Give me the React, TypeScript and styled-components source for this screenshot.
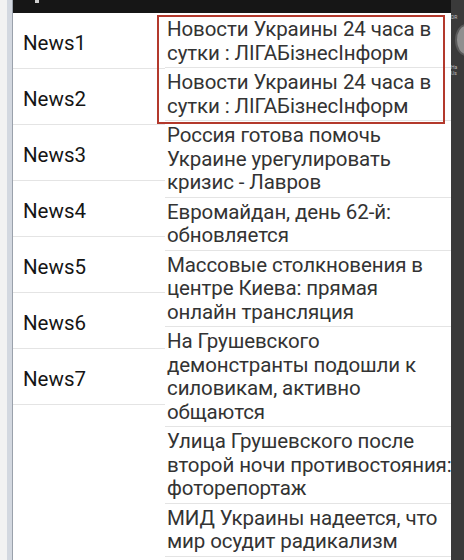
import React from "react";
import styled, { createGlobalStyle } from "styled-components";

const GlobalStyle = createGlobalStyle`
  html, body {
    margin: 0;
    padding: 0;
    background: #ffffff;
  }
  body {
    font-family: Roboto, "Noto Sans", "DejaVu Sans", sans-serif;
  }
`;

const Frame = styled.div`
  display: flex;
  width: 464px;
  height: 560px;
  overflow: hidden;
`;

const HostStrip = styled.div`
  width: 13px;
  flex-shrink: 0;
  display: flex;
  background: #eef0f3;
`;

const HostEdge = styled.div`
  width: 7px;
  background: #f2f2f2;
`;

const HostBorder = styled.div`
  width: 5px;
  background: #d3d8e0;
  border-right: 1px solid #9aa1ab;
`;

const Screen = styled.div`
  flex: 1;
  display: flex;
  flex-direction: column;
  min-width: 0;
`;

const ActionBar = styled.div`
  height: 13px;
  flex-shrink: 0;
  background: #161616;
  display: flex;
  align-items: flex-start;
  padding-left: 22px;
`;

const ActionBit = styled.div`
  width: 4px;
  height: 3px;
  background: #cfcfcf;
`;

const Content = styled.div`
  position: relative;
  flex: 1;
  display: flex;
  background: #ffffff;
  overflow: hidden;
`;

const TitleList = styled.div`
  width: 152px;
  flex-shrink: 0;
  display: flex;
  flex-direction: column;
`;

const TitleRow = styled.div`
  height: 56px;
  box-sizing: border-box;
  display: flex;
  align-items: center;
  padding: 4px 0 0 10px;
  border-bottom: 1px solid #e4e4e4;
  font-size: 20.5px;
  color: #151515;
`;

const HeadlineList = styled.div`
  flex: 1;
  min-width: 0;
  display: flex;
  flex-direction: column;
  padding-top: 2px;
`;

const Headline = styled.div`
  padding: 3px 0 2px 2px;
  border-bottom: 1px solid #e4e4e4;
  font-size: 20.5px;
  line-height: 23.5px;
  letter-spacing: -0.1px;
  color: #333333;
  white-space: pre;
`;

const Highlight = styled.div`
  position: absolute;
  left: 144px;
  top: 2px;
  width: 284px;
  height: 105px;
  border: 2px solid #b3392c;
  pointer-events: none;
`;

const SidePanel = styled.div`
  width: 13px;
  flex-shrink: 0;
  background: #3a3a3a;
  display: flex;
  flex-direction: column;
  align-items: flex-start;
  padding-top: 14px;
  overflow: hidden;
  font-size: 5px;
  color: #bdbdbd;
  line-height: 6px;
`;

const SideDot = styled.div`
  width: 18px;
  height: 28px;
  flex-shrink: 0;
  border-radius: 50%;
  background: #8f8f8f;
  border: 2px solid #5a5a5a;
  margin: 4px 0 8px 4px;
`;

const titles = ["News1", "News2", "News3", "News4", "News5", "News6", "News7"];

const headlines = [
  "Новости Украины 24 часа в\nсутки : ЛIГАБiзнесIнформ",
  "Новости Украины 24 часа в\nсутки : ЛIГАБiзнесIнформ",
  "Россия готова помочь\nУкраине урегулировать\nкризис - Лавров",
  "Евромайдан, день 62-й:\nобновляется",
  "Массовые столкновения в\nцентре Киева: прямая\nонлайн трансляция",
  "На Грушевского\nдемонстранты подошли к\nсиловикам, активно\nобщаются",
  "Улица Грушевского после\nвторой ночи противостояния:\nфоторепортаж",
  "МИД Украины надеется, что\nмир осудит радикализм",
];

const App: React.FC = () => {
  return (
    <>
      <GlobalStyle />
      <Frame>
        <HostStrip>
          <HostEdge />
          <HostBorder />
        </HostStrip>
        <Screen>
          <ActionBar>
            <ActionBit />
          </ActionBar>
          <Content>
            <TitleList>
              {titles.map((t) => (
                <TitleRow key={t}>{t}</TitleRow>
              ))}
            </TitleList>
            <HeadlineList>
              {headlines.map((h, i) => (
                <Headline key={i}>{h}</Headline>
              ))}
            </HeadlineList>
            <Highlight />
          </Content>
        </Screen>
        <SidePanel>
          <span>DR</span>
          <SideDot />
          <span>Ha</span>
          <span>Us</span>
        </SidePanel>
      </Frame>
    </>
  );
};

export default App;
